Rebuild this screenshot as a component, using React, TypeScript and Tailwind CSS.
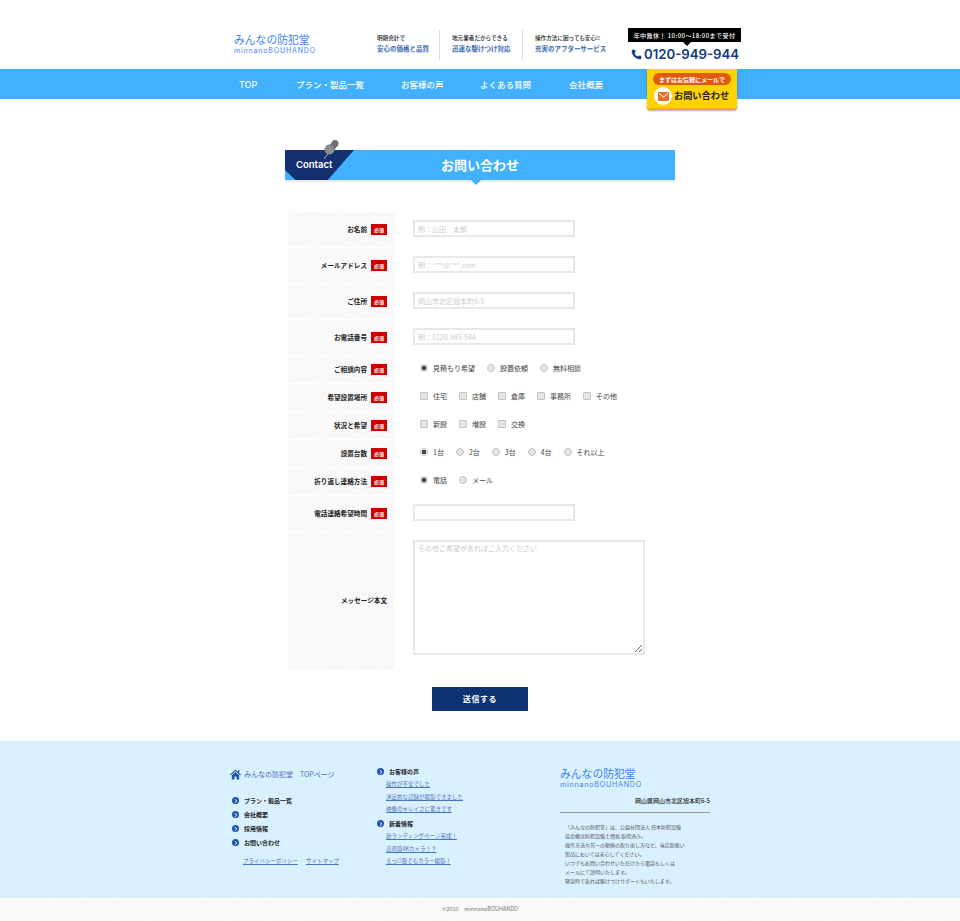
import React from "react";
import { Phone, ChevronRight } from "lucide-react";

const jp = "font-['Noto_Sans_CJK_JP','Noto_Sans',sans-serif]";
const stripes =
    "bg-[repeating-linear-gradient(135deg,#f6f6f6_0px,#f6f6f6_1px,#fbfbfb_1px,#fbfbfb_2.5px)]";

function Logo() {
    return (
        <div className="text-[#3d82f2]">
            <div className="text-[10.8px] leading-[13px]">みんなの防犯堂</div>
            <div className="font-['Inter',sans-serif] text-[7px] leading-[9px] tracking-[0.85px]">
                minnanoBOUHANDO
            </div>
        </div>
    );
}

function Feature({ top, bottom, width }: { top: string; bottom: string; width: string }) {
    return (
        <div className={`flex flex-col gap-[1px] pb-[3px] ${width}`}>
            <span className="text-[5.6px] leading-[8px] font-medium text-[#222]">{top}</span>
            <span className="text-[6.5px] leading-[10px] font-medium text-[#2c62b0] [text-shadow:0_1px_1px_#b5c2d6]">
                {bottom}
            </span>
        </div>
    );
}

function Required() {
    return (
        <span className="flex h-[11px] w-4 shrink-0 items-center justify-center bg-[#cc0000] text-[5px] font-bold text-white">
            必須
        </span>
    );
}

function Row({
    label,
    height,
    required = true,
    children,
}: {
    label: string;
    height: string;
    required?: boolean;
    children: React.ReactNode;
}) {
    return (
        <div className={`flex ${height}`}>
            <div className={`flex w-[107px] items-center justify-end gap-1 pr-2 ${stripes}`}>
                <span className="text-[6.6px] font-bold whitespace-nowrap text-[#222]">{label}</span>
                {required && <Required />}
            </div>
            <div className="flex flex-1 items-center pl-[18px]">{children}</div>
        </div>
    );
}

function TextBox({ placeholder }: { placeholder?: string }) {
    return (
        <input
            placeholder={placeholder}
            className="mb-[2px] h-[17px] w-[162px] border-2 border-[#e8e8e8] bg-white px-[3px] text-[7px] outline-none placeholder:text-[#ccc]"
        />
    );
}

function Options({
    type,
    name,
    items,
}: {
    type: "radio" | "checkbox";
    name: string;
    items: string[];
}) {
    const mark =
        type === "radio"
            ? "rounded-full checked:bg-[radial-gradient(circle,#444_0,#444_2px,#e6e6e6_2.5px)]"
            : "rounded-[1px]";
    return (
        <div className="flex items-center gap-3 pb-[4px] pl-[7px]">
            {items.map((item, i) => (
                <label key={item} className="flex items-center gap-[5px]">
                    <input
                        type={type}
                        name={name}
                        defaultChecked={type === "radio" && i === 0}
                        className={`h-2 w-2 appearance-none border border-[#c4c4c4] bg-[#e6e6e6] ${mark}`}
                    />
                    <span className="text-[7px] leading-[10px] text-[#444]">{item}</span>
                </label>
            ))}
        </div>
    );
}

function FooterHead({ children }: { children: string }) {
    return (
        <div className="flex items-center gap-[5px]">
            <span className="flex h-[7px] w-[7px] items-center justify-center rounded-full bg-[#1f55ad]">
                <ChevronRight size={6} strokeWidth={4} className="text-white" />
            </span>
            <span className="text-[6px] leading-[9px] font-bold text-[#222]">{children}</span>
        </div>
    );
}

function FooterLink({ children }: { children: string }) {
    return <a className="text-[5.5px] leading-[9px] text-[#4a73b8] underline">{children}</a>;
}

export default function App() {
    return (
        <div className={`${jp} h-[921px] w-[960px] overflow-hidden bg-white`}>
            {/* top header */}
            <header className="flex h-[69px] items-start pt-[28px] pl-[234px]">
                <div className="w-[143px] pt-[5px]">
                    <Logo />
                </div>
                <div className="flex items-center pt-[2px]">
                    <Feature width="w-[62px]" top="明朗会計で" bottom="安心の価格と品質" />
                    <div className="mr-3 h-[30px] w-px bg-[#ddd]" />
                    <Feature width="w-[70px]" top="地元業者だからできる" bottom="迅速な駆けつけ対応" />
                    <div className="mr-3 h-[30px] w-px bg-[#ddd]" />
                    <Feature width="w-[93px]" top="操作方法に困っても安心!!" bottom="充実のアフターサービス" />
                </div>
                <div className="flex w-[113px] flex-col items-start">
                    <div className="relative flex h-[14px] w-[113px] items-center justify-center bg-black text-[6px] font-medium tracking-[0.45px] whitespace-nowrap text-white">
                        年中無休！ 10:00～18:00まで受付
                        <span className="absolute top-full left-[55px] h-0 w-0 border-x-[4px] border-t-[4px] border-x-transparent border-t-black" />
                    </div>
                    <div className="mt-[3px] flex items-center gap-[2px] pl-[3px] text-[#113a7e]">
                        <Phone size={11} fill="#113a7e" strokeWidth={1} />
                        <span className="font-['Inter',sans-serif] text-[13.2px] leading-[18px] font-semibold whitespace-nowrap">
                            0120-949-944
                        </span>
                    </div>
                </div>
            </header>

            {/* main nav */}
            <nav className="relative flex h-[30px] items-center bg-[#41b0ff] pl-[239px] text-[8.5px] font-medium text-white">
                <span className="w-[57px] pt-[1px] font-['Inter',sans-serif] text-[9px]">TOP</span>
                <span className="w-[105px]">プラン・製品一覧</span>
                <span className="w-[79px]">お客様の声</span>
                <span className="w-[89px]">よくある質問</span>
                <span>会社概要</span>
                <a className="absolute top-0 left-[647px] flex h-[41px] w-[90px] flex-col items-center rounded-b-[3px] border-b-2 border-[#f0b400] bg-[#ffd200] pt-1 shadow-[0_1px_2px_rgba(0,0,0,0.35)]">
                    <span className="flex h-3 w-[78px] items-center justify-center rounded-full bg-[#e05a0c] text-[6px] font-bold text-white">
                        まずはお気軽にメールで
                    </span>
                    <span className="mt-[2px] flex w-full items-center gap-[2px] pl-[7px]">
                        <span className="flex h-[18px] w-[18px] items-center justify-center rounded-full bg-white">
                            <svg width="11" height="9" viewBox="0 0 11 9">
                                <rect width="11" height="9" rx="1" fill="#e8702a" />
                                <path d="M1 1.5 L5.5 5 L10 1.5" fill="none" stroke="#fff" strokeWidth="1" />
                            </svg>
                        </span>
                        <span className="text-[9.2px] font-bold whitespace-nowrap text-[#222]">お問い合わせ</span>
                    </span>
                </a>
            </nav>

            {/* page title */}
            <div className="relative mx-auto mt-[51px] flex h-[30px] w-[390px] items-center justify-center bg-[#41b0ff] shadow-[0_2px_2px_rgba(0,0,0,0.1)]">
                <span className="text-[13px] font-bold text-white">お問い合わせ</span>
                <div className="absolute top-0 left-0 flex h-[30px] w-[69px] items-center bg-[#14306f] pl-[11px] [clip-path:polygon(0_0,100%_0,62%_100%,15%_100%,0_67%)]">
                    <span className="font-['Inter',sans-serif] text-[9.5px] font-semibold text-white">Contact</span>
                </div>
                {/* push pin on the tab corner */}
                <svg className="absolute -top-[11px] left-[37px]" width="18" height="21" viewBox="0 0 18 21">
                    <path d="M2 20 L8 12" stroke="#aaa" strokeWidth="1" />
                    <path d="M7 6 L11 3 L15 7 L12 12 Z" fill="#6f6f6f" />
                    <circle cx="7.5" cy="10.5" r="5" fill="#8c8c8c" />
                    <circle cx="13" cy="4.5" r="3.5" fill="#707070" />
                </svg>
                <span className="absolute top-full left-[186px] h-0 w-0 border-x-[5px] border-t-[5px] border-x-transparent border-t-[#41b0ff]" />
            </div>

            {/* contact form */}
            <form className="mt-8 ml-[288px] flex w-[372px] flex-col gap-px">
                <Row label="お名前" height="h-[35px]">
                    <TextBox placeholder="例：山田　太郎" />
                </Row>
                <Row label="メールアドレス" height="h-[35px]">
                    <TextBox placeholder="例： ***@***.com" />
                </Row>
                <Row label="ご住所" height="h-[35px]">
                    <TextBox placeholder="岡山市北区旭本町6-5" />
                </Row>
                <Row label="お電話番号" height="h-[35px]">
                    <TextBox placeholder="例：0120-949-944" />
                </Row>
                <Row label="ご相談内容" height="h-[27px]">
                    <Options type="radio" name="kind" items={["見積もり希望", "設置依頼", "無料相談"]} />
                </Row>
                <Row label="希望設置場所" height="h-[27px]">
                    <Options type="checkbox" name="place" items={["住宅", "店舗", "倉庫", "事務所", "その他"]} />
                </Row>
                <Row label="状況と希望" height="h-[27px]">
                    <Options type="checkbox" name="state" items={["新設", "増設", "交換"]} />
                </Row>
                <Row label="設置台数" height="h-[27px]">
                    <Options type="radio" name="count" items={["1台", "2台", "3台", "4台", "それ以上"]} />
                </Row>
                <Row label="折り返し連絡方法" height="h-[27px]">
                    <Options type="radio" name="reply" items={["電話", "メール"]} />
                </Row>
                <Row label="電話連絡希望時間" height="h-[35px]">
                    <TextBox />
                </Row>
                <Row label="メッセージ本文" height="h-[138px]" required={false}>
                    <textarea
                        placeholder="その他ご希望があればご入力ください"
                        className="mb-[7px] h-[115px] w-[232px] border-2 border-[#e8e8e8] bg-white px-[3px] py-[1px] text-[7px] outline-none placeholder:text-[#ccc]"
                    />
                </Row>
            </form>

            <div className="mt-[17px] flex justify-center">
                <button
                    type="button"
                    className="h-6 w-24 bg-[#0f3272] text-[8px] font-bold tracking-[0.6px] text-white"
                >
                    送信する
                </button>
            </div>

            {/* site footer */}
            <footer className="mt-[30px] flex h-[157px] bg-[#d9f0ff] pt-[26px] pl-[230px]">
                <div className="flex w-[147px] flex-col pt-[2px]">
                    <div className="flex items-center gap-[3px]">
                        <svg width="11" height="11" viewBox="0 0 11 11">
                            <path
                                d="M5.5 0.5 L8 2.7 V1 H9.3 V3.9 L11 5.5 L10.3 6.2 L5.5 2 L0.7 6.2 L0 5.5 Z M1.8 6.3 L5.5 3.1 L9.2 6.3 V10.5 H6.5 V7.5 H4.5 V10.5 H1.8 Z"
                                fill="#1f55ad"
                            />
                        </svg>
                        <span className="text-[7px] text-[#4a73b8]">みんなの防犯堂　TOPページ</span>
                    </div>
                    <div className="mt-[16px] flex flex-col gap-[5px] pl-[2px]">
                        <FooterHead>プラン・製品一覧</FooterHead>
                        <FooterHead>会社概要</FooterHead>
                        <FooterHead>採用情報</FooterHead>
                        <FooterHead>お問い合わせ</FooterHead>
                    </div>
                    <div className="mt-[10px] flex gap-2 pl-[13px]">
                        <FooterLink>プライバシーポリシー</FooterLink>
                        <FooterLink>サイトマップ</FooterLink>
                    </div>
                </div>
                <div className="flex w-[183px] flex-col">
                    <FooterHead>お客様の声</FooterHead>
                    <div className="mt-[4px] flex flex-col items-start gap-[3.5px] pl-[9px]">
                        <FooterLink>操作が不安でした</FooterLink>
                        <FooterLink>決定的な記録が撮影できました</FooterLink>
                        <FooterLink>映像のキレイさに驚きです</FooterLink>
                    </div>
                    <div className="mt-[5px]">
                        <FooterHead>新着情報</FooterHead>
                    </div>
                    <div className="mt-[4px] flex flex-col items-start gap-[3.5px] pl-[9px]">
                        <FooterLink>新ランディングページ完成！</FooterLink>
                        <FooterLink>高画質4Kカメラ！？</FooterLink>
                        <FooterLink>えっ!?夜でもカラー撮影！</FooterLink>
                    </div>
                </div>
                <div className="w-[150px]">
                    <Logo />
                    <div className="mt-[7px] border-b border-[#999] pb-[7px] text-right text-[6px] leading-[9px] font-medium text-[#222]">
                        岡山県岡山市北区旭本町6-5
                    </div>
                    <p className="mt-[9px] pl-[5px] text-[5px] leading-[9px] whitespace-nowrap text-[#555]">
                        「みんなの防犯堂」は、公益社団法人 日本防犯設備
                        <br />
                        協会概念防犯設備士資格 取得済み。
                        <br />
                        操作方法や万一の動画の取り出し方など、当店取扱い
                        <br />
                        製品においては安心してください。
                        <br />
                        いつでもお問い合わせいただけたら電話もしくは
                        <br />
                        メールにて説明いたします。
                        <br />
                        緊急時であれば駆けつけサポートもいたします。
                    </p>
                </div>
            </footer>
            <div className={`flex h-[23px] items-center justify-center text-[5.5px] text-[#777] ${stripes}`}>
                ©2010　minnanoBOUHANDO
            </div>
        </div>
    );
}
